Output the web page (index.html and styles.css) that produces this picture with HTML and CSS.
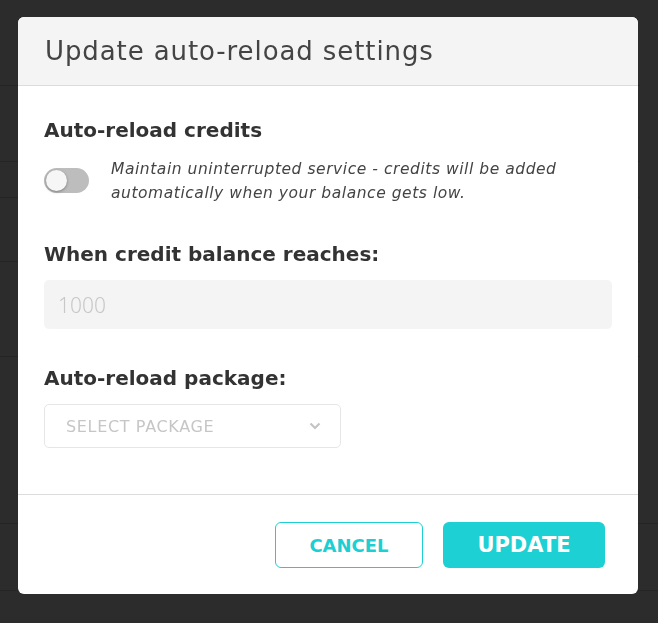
FILE: index.html
```html
<!DOCTYPE html>
<html lang="en">
<head>
    <meta charset="UTF-8">
    <title>Update auto-reload settings</title>
    <link rel="stylesheet" href="styles.css">
</head>
<body>
    <!-- page behind the overlay -->
    <div class="backdrop">
        <div class="table">
            <div class="row" style="height: 86px"></div>
            <div class="row" style="height: 76px"></div>
            <div class="row" style="height: 36px"></div>
            <div class="row" style="height: 64px"></div>
            <div class="row" style="height: 95px"></div>
        </div>
        <div class="band" style="height: 167px"></div>
        <div class="band" style="height: 67px"></div>
    </div>

    <div class="overlay">
        <div class="modal">
            <header class="modal-header">
                <h1>Update auto-reload settings</h1>
            </header>

            <div class="modal-body">
                <h2>Auto-reload credits</h2>
                <div class="toggle-row">
                    <span class="toggle"><span class="knob"></span></span>
                    <p>Maintain uninterrupted service - credits will be added automatically when your balance gets low.</p>
                </div>

                <h2 class="label">When credit balance reaches:</h2>
                <div class="input">1000</div>

                <h2 class="label">Auto-reload package:</h2>
                <div class="select">
                    <span>SELECT PACKAGE</span>
                    <svg width="12" height="8" viewBox="0 0 12 8"><path d="M1.5 1.5 6 6l4.5-4.5" fill="none" stroke="#c4c4c4" stroke-width="2.2"/></svg>
                </div>
            </div>

            <footer class="modal-footer">
                <button class="btn btn-outline">CANCEL</button>
                <button class="btn btn-solid">UPDATE</button>
            </footer>
        </div>
    </div>
</body>
</html>
```

FILE: styles.css
```css
/* base */
body {
    margin: 0;
    background: #2c2c2c;
    font-family: 'DejaVu Sans', 'Liberation Sans', sans-serif;
    color: #333;
    height: 623px;
    overflow: hidden;
}

/* page behind */
.table {
    width: 640px;
}

.row {
    border-bottom: 1px solid #252525;
    box-sizing: border-box;
}

.band {
    border-bottom: 1px solid #252525;
    box-sizing: border-box;
}

/* modal */
.overlay {
    position: fixed;
    inset: 0;
    padding: 17px 0 0 18px;
}

.modal {
    width: 620px;
    background: #fff;
    border-radius: 6px;
    overflow: hidden;
}

.modal-header {
    background: #f4f4f4;
    border-bottom: 1px solid #dcdcdc;
    height: 69px;
    box-sizing: border-box;
    padding: 0 27px;
    display: flex;
    align-items: center;
}

.modal-header h1 {
    margin: 0;
    font-family: 'DejaVu Sans', 'Liberation Sans', sans-serif;
    font-weight: 400;
    font-size: 26px;
    letter-spacing: 0.9px;
    color: #444;
}

.modal-body {
    padding: 32px 26px 46px;
    border-bottom: 1px solid #dcdcdc;
}

.modal-body h2 {
    margin: 0;
    font-size: 20px;
    font-weight: 700;
    color: #333;
    line-height: 24px;
}

.modal-body h2.label {
    margin-top: 37px;
}

.toggle-row {
    display: flex;
    align-items: center;
    gap: 22px;
    margin-top: 13px;
}

.toggle {
    flex: none;
    width: 45px;
    height: 25px;
    border-radius: 13px;
    background: #bdbdbd;
    display: flex;
    align-items: center;
    padding-left: 2px;
    box-sizing: border-box;
}

.knob {
    width: 21px;
    height: 21px;
    border-radius: 50%;
    background: #f6f6f6;
    box-shadow: 0 1px 3px rgba(0, 0, 0, 0.35);
}

.toggle-row p {
    margin: 0;
    font-size: 15.5px;
    font-style: italic;
    letter-spacing: 0.55px;
    line-height: 24px;
    color: #444;
    max-width: 470px;
    padding-top: 2px;
}

.input {
    margin-top: 14px;
    height: 49px;
    background: #f4f4f4;
    border-radius: 5px;
    box-sizing: border-box;
    padding: 0 14px;
    display: flex;
    align-items: center;
    font-family: 'Noto Sans', sans-serif;
    font-size: 21px;
    font-weight: 300;
    color: #c8c8c8;
}

.modal-body .input + h2.label {
    margin-top: 37px;
}

.select {
    margin-top: 14px;
    width: 297px;
    height: 44px;
    border: 1px solid #e6e6e6;
    border-radius: 5px;
    box-sizing: border-box;
    padding: 0 19px 0 21px;
    display: flex;
    align-items: center;
    justify-content: space-between;
    font-size: 16px;
    letter-spacing: 0.65px;
    color: #c6c6c6;
}

.modal-footer {
    display: flex;
    justify-content: flex-end;
    gap: 20px;
    padding: 27px 33px 26px;
}

.btn {
    font-family: 'DejaVu Sans', 'Liberation Sans', sans-serif;
    font-weight: 700;
    border-radius: 6px;
    height: 46px;
    cursor: pointer;
}

.btn-outline {
    width: 148px;
    background: #fff;
    border: 1px solid #1ccfd3;
    color: #1ccfd3;
    font-size: 18px;
}

.btn-solid {
    width: 162px;
    background: #1dd0d3;
    border: 0;
    color: #fff;
    font-size: 21px;
}
```
